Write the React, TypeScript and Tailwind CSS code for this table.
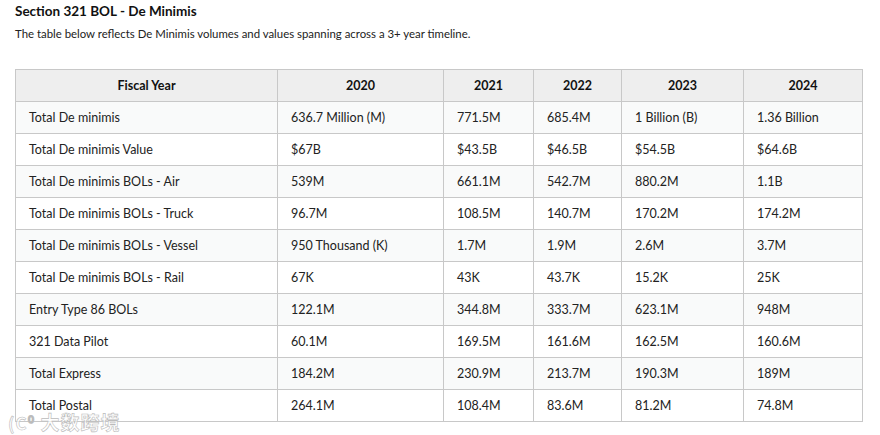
import React from "react";

const years = ["2020", "2021", "2022", "2023", "2024"];
const rows: string[][] = [
  ["Total De minimis", "636.7 Million (M)", "771.5M", "685.4M", "1 Billion (B)", "1.36 Billion"],
  ["Total De minimis Value", "$67B", "$43.5B", "$46.5B", "$54.5B", "$64.6B"],
  ["Total De minimis BOLs - Air", "539M", "661.1M", "542.7M", "880.2M", "1.1B"],
  ["Total De minimis BOLs - Truck", "96.7M", "108.5M", "140.7M", "170.2M", "174.2M"],
  ["Total De minimis BOLs - Vessel", "950 Thousand (K)", "1.7M", "1.9M", "2.6M", "3.7M"],
  ["Total De minimis BOLs - Rail", "67K", "43K", "43.7K", "15.2K", "25K"],
  ["Entry Type 86 BOLs", "122.1M", "344.8M", "333.7M", "623.1M", "948M"],
  ["321 Data Pilot", "60.1M", "169.5M", "161.6M", "162.5M", "160.6M"],
  ["Total Express", "184.2M", "230.9M", "213.7M", "190.3M", "189M"],
  ["Total Postal", "264.1M", "108.4M", "83.6M", "81.2M", "74.8M"],
];

export default function App() {
  return (
    <div className="relative w-[880px] h-[435px] bg-white text-[#222] overflow-hidden" style={{ fontFamily: "Lato, 'Noto Sans', sans-serif" }}>
      <div className="pl-[15px] pt-[2px]">
        <h1 className="text-[13.5px] font-bold leading-[18px] text-[#111]">Section 321 BOL - De Minimis</h1>
        <p className="mt-[6px] text-[11.4px] leading-[15px] text-[#222]">
          The table below reflects De Minimis volumes and values spanning across a 3+ year timeline.
        </p>
      </div>
      <table className="ml-[15px] mt-[28px] border-collapse text-[12.5px] table-fixed w-[847px]">
        <colgroup>
          <col className="w-[262px]" />
          <col className="w-[166px]" />
          <col className="w-[90px]" />
          <col className="w-[88px]" />
          <col className="w-[122px]" />
          <col className="w-[119px]" />
        </colgroup>
        <thead>
          <tr className="bg-[#eeeeee] h-[32px]">
            <th className="border border-[#c8c8c8] pt-[2px] font-bold text-center text-[#111]">Fiscal Year</th>
            {years.map((y) => (
              <th key={y} className="border border-[#c8c8c8] pt-[2px] font-bold text-center text-[#111]">{y}</th>
            ))}
          </tr>
        </thead>
        <tbody>
          {rows.map((r, i) => (
            <tr key={i} className={`h-[32px] ${i % 2 === 0 ? "bg-[#f9fafa]" : "bg-white"}`}>
              {r.map((c, j) => (
                <td key={j} className="border border-[#c8c8c8] pl-[13px] pt-[2px] text-left whitespace-nowrap">{c}</td>
              ))}
            </tr>
          ))}
        </tbody>
      </table>
      <div
        className="absolute left-[8px] top-[411px] text-[19px] leading-[22px] font-bold tracking-[1px] text-white/70"
        style={{ fontFamily: "'Noto Sans CJK SC', sans-serif", WebkitTextStroke: "0.6px #bbbbbb" }}
      >
        <span className="text-[17px] mr-[6px]">(C⁰</span>大数跨境
      </div>
    </div>
  );
}
